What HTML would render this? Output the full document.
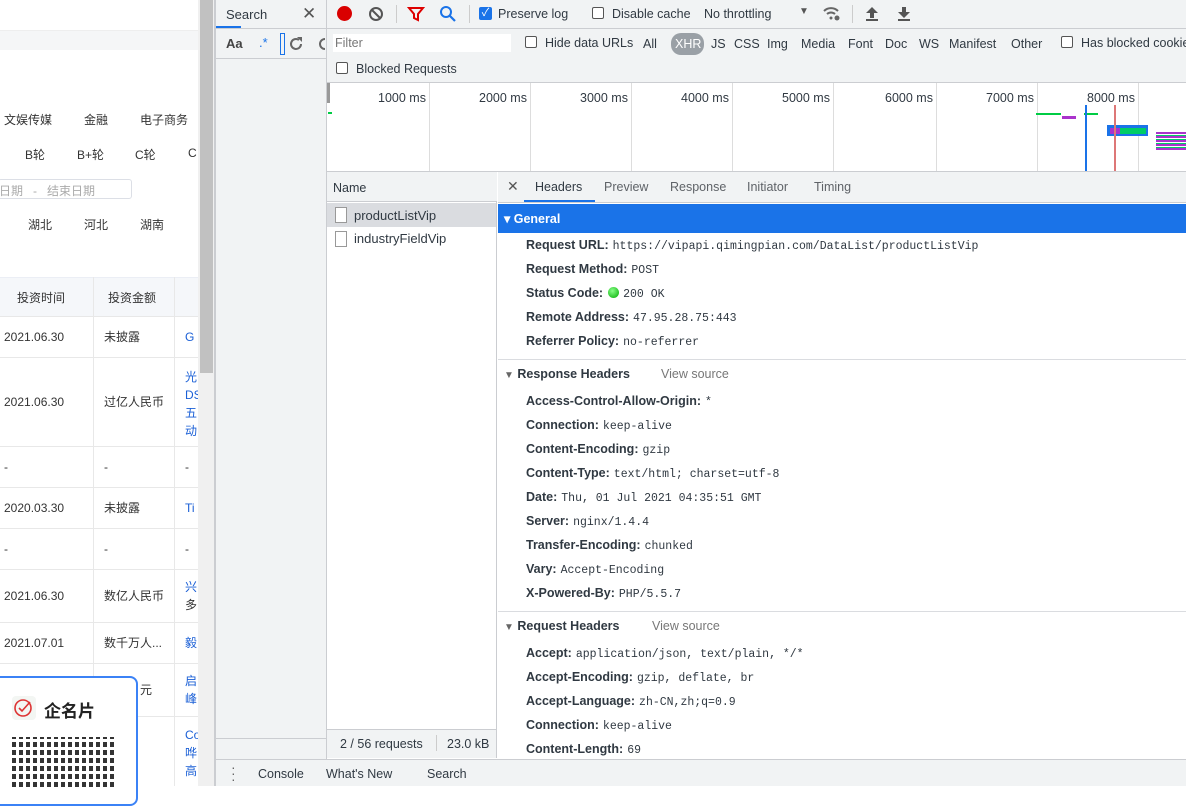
<!DOCTYPE html>
<html><head><meta charset="utf-8"><style>
*{margin:0;padding:0;box-sizing:border-box}
body{width:1186px;height:786px;overflow:hidden;position:relative;background:#fff;font-family:"Liberation Sans","Noto Sans CJK SC",sans-serif;font-size:12px;color:#303942}
.a{position:absolute;white-space:nowrap}
.cn{font-size:12px;color:#333}
.ln{position:absolute;background:#e8e8e8}
.dt{font-size:12.5px;color:#303942}
.k{position:absolute;font-weight:bold;font-size:12.5px;color:#303942;white-space:nowrap}
.v{font-family:"Liberation Mono",monospace;font-weight:normal;font-size:11.5px;margin-left:4px}
.cb{position:absolute;width:12px;height:12px;border:1px solid #555;border-radius:2px;background:#fff}
.blue{color:#1a5fd6}
</style></head><body>
<!-- left page -->
<div class="a" style="left:0;top:30px;width:198px;height:20px;background:#f5f6f7;border-top:1px solid #eee"></div>
<div class="a cn" style="left:4px;top:111px">文娱传媒</div>
<div class="a cn" style="left:84px;top:111px">金融</div>
<div class="a cn" style="left:140px;top:111px">电子商务</div>
<div class="a cn" style="left:25px;top:146px">B轮</div>
<div class="a cn" style="left:77px;top:146px">B+轮</div>
<div class="a cn" style="left:135px;top:146px">C轮</div>
<div class="a cn" style="left:188px;top:146px">C</div>
<div class="a" style="left:-2px;top:179px;width:134px;height:20px;border:1px solid #dcdfe6;border-radius:3px;color:#aaa;font-size:12px;padding:2px 0 0 0">日期 &nbsp; - &nbsp; 结束日期</div>
<div class="a cn" style="left:28px;top:216px">湖北</div>
<div class="a cn" style="left:84px;top:216px">河北</div>
<div class="a cn" style="left:140px;top:216px">湖南</div>
<div class="a" style="left:0;top:277px;width:198px;height:40px;background:#f5f7fa;border-top:1px solid #ebeef5"></div>
<div class="a cn" style="left:17px;top:289px">投资时间</div>
<div class="a cn" style="left:108px;top:289px">投资金额</div>
<div class="ln" style="left:93px;top:277px;width:1px;height:509px"></div>
<div class="ln" style="left:174px;top:277px;width:1px;height:509px"></div>
<div class="ln" style="left:0;top:316px;width:198px;height:1px"></div>
<div class="ln" style="left:0;top:357px;width:198px;height:1px"></div>
<div class="ln" style="left:0;top:446px;width:198px;height:1px"></div>
<div class="ln" style="left:0;top:487px;width:198px;height:1px"></div>
<div class="ln" style="left:0;top:528px;width:198px;height:1px"></div>
<div class="ln" style="left:0;top:569px;width:198px;height:1px"></div>
<div class="ln" style="left:0;top:622px;width:198px;height:1px"></div>
<div class="ln" style="left:0;top:663px;width:198px;height:1px"></div>
<div class="ln" style="left:0;top:716px;width:198px;height:1px"></div>
<div class="a cn" style="left:4px;top:330px">2021.06.30</div><div class="a cn" style="left:104px;top:328px">未披露</div><div class="a blue" style="left:185px;top:330px">G</div>
<div class="a cn" style="left:4px;top:395px">2021.06.30</div><div class="a cn" style="left:104px;top:393px">过亿人民币</div>
<div class="a blue" style="left:185px;top:368px;line-height:18px;white-space:normal;width:14px;overflow:hidden">光<br>DS<br>五<br>动</div>
<div class="a cn" style="left:4px;top:460px">-</div><div class="a cn" style="left:104px;top:460px">-</div><div class="a cn" style="left:185px;top:460px">-</div>
<div class="a cn" style="left:4px;top:501px">2020.03.30</div><div class="a cn" style="left:104px;top:499px">未披露</div><div class="a blue" style="left:185px;top:501px">Ti</div>
<div class="a cn" style="left:4px;top:542px">-</div><div class="a cn" style="left:104px;top:542px">-</div><div class="a cn" style="left:185px;top:542px">-</div>
<div class="a cn" style="left:4px;top:589px">2021.06.30</div><div class="a cn" style="left:104px;top:587px">数亿人民币</div><div class="a blue" style="left:185px;top:578px;line-height:18px">兴<br><span style="color:#333">多</span></div>
<div class="a cn" style="left:4px;top:636px">2021.07.01</div><div class="a cn" style="left:104px;top:634px">数千万人...</div><div class="a blue" style="left:185px;top:634px">毅</div>
<div class="a cn" style="left:140px;top:681px">元</div><div class="a blue" style="left:185px;top:672px;line-height:18px">启<br>峰</div>
<div class="a blue" style="left:185px;top:726px;line-height:18px">Co<br>哗<br>高</div>
<div class="a" style="left:-10px;top:676px;width:148px;height:130px;border:2px solid #3b82f6;border-radius:8px;background:#fff"></div>
<div class="a" style="left:12px;top:696px;width:24px;height:24px;background:#f3f6f3;border-radius:4px"><svg width="24" height="24"><circle cx="11" cy="12" r="8" fill="none" stroke="#d33" stroke-width="1.6"/><path d="M7 12l3 3 8-9" fill="none" stroke="#d33" stroke-width="1.6"/></svg></div>
<div class="a" style="left:44px;top:697px;font-size:17px;font-weight:bold;color:#222">企名片</div>
<div class="a" style="left:12px;top:737px;width:102px;height:50px;background:repeating-linear-gradient(90deg,#111 0 4px,#fff 4px 7px),#111;opacity:.85"></div>
<div class="a" style="left:12px;top:737px;width:102px;height:50px;background:repeating-linear-gradient(0deg,transparent 0 5px,#fff 5px 8px)"></div>
<!-- scrollbar -->
<div class="a" style="left:198px;top:0;width:16px;height:786px;background:#f0f0f0"></div>
<div class="a" style="left:200px;top:0;width:13px;height:373px;background:#c1c1c1"></div>
<div class="a" style="left:214px;top:0;width:2px;height:786px;background:#cbcdd1"></div>
<!-- search panel -->
<div class="a" style="left:216px;top:0;width:111px;height:786px;background:#f1f3f4;border-right:1px solid #cbcdd1"></div>
<div class="a" style="left:216px;top:28px;width:110px;height:1px;background:#cbcdd1"></div>
<div class="a" style="left:216px;top:26px;width:25px;height:2px;background:#1a73e8"></div>
<div class="a dt" style="left:226px;top:7px;font-size:13px">Search</div>
<div class="a" style="left:302px;top:4px;font-size:17px;color:#555">✕</div>
<div class="a" style="left:226px;top:36px;font-weight:bold;font-size:13px;color:#444">Aa</div>
<div class="a" style="left:259px;top:35px;font-size:13px;color:#1a73e8">.*</div>
<div class="a" style="left:280px;top:33px;width:5px;height:22px;border:1.5px solid #1a73e8"></div>
<svg class="a" style="left:288px;top:36px" width="16" height="16"><path d="M13 8a5 5 0 1 1-2-4" fill="none" stroke="#666" stroke-width="2"/><path d="M9 1h5v5z" fill="#666"/></svg>
<svg class="a" style="left:318px;top:36px" width="8" height="16"><path d="M7 3a5 5 0 0 0 0 10" fill="none" stroke="#666" stroke-width="2"/></svg>
<div class="a" style="left:216px;top:58px;width:110px;height:1px;background:#cbcdd1"></div>
<div class="a" style="left:216px;top:738px;width:110px;height:1px;background:#cbcdd1"></div>
<!-- network toolbar -->
<div class="a" style="left:327px;top:0;width:859px;height:82px;background:#f1f3f4"></div>
<div class="a" style="left:327px;top:28px;width:859px;height:1px;background:#cbcdd1"></div>
<div class="a" style="left:337px;top:6px;width:15px;height:15px;border-radius:50%;background:#d90000"></div>
<svg class="a" style="left:368px;top:6px" width="16" height="16"><circle cx="8" cy="8" r="6" fill="none" stroke="#555" stroke-width="2"/><path d="M4 4l8 8" stroke="#555" stroke-width="2"/></svg>
<div class="a" style="left:396px;top:5px;width:1px;height:18px;background:#ccc"></div>
<svg class="a" style="left:407px;top:6px" width="18" height="16"><path d="M2 2h14l-5 6v6l-4-2v-4z" fill="none" stroke="#d00" stroke-width="2"/></svg>
<svg class="a" style="left:439px;top:5px" width="18" height="18"><circle cx="7" cy="7" r="5" fill="none" stroke="#1a73e8" stroke-width="2"/><path d="M11 11l5 5" stroke="#1a73e8" stroke-width="2.2"/></svg>
<div class="a" style="left:469px;top:5px;width:1px;height:18px;background:#ccc"></div>
<div class="a" style="left:479px;top:7px;width:13px;height:13px;background:#1a73e8;border-radius:2px;color:#fff;font-size:11px;line-height:13px;text-align:center">✓</div>
<div class="a dt" style="left:498px;top:7px">Preserve log</div>
<div class="cb" style="left:592px;top:7px"></div>
<div class="a dt" style="left:612px;top:7px">Disable cache</div>
<div class="a dt" style="left:704px;top:7px">No throttling</div>
<div class="a" style="left:799px;top:6px;font-size:10px;color:#555">▼</div>
<svg class="a" style="left:822px;top:5px" width="20" height="16"><path d="M2 6a10 10 0 0 1 14 0M5 9a6 6 0 0 1 8 0" fill="none" stroke="#666" stroke-width="2"/><circle cx="9" cy="13" r="1.5" fill="#666"/><circle cx="15" cy="13" r="2.5" fill="#666"/></svg>
<div class="a" style="left:852px;top:5px;width:1px;height:18px;background:#ccc"></div>
<svg class="a" style="left:865px;top:6px" width="14" height="16"><path d="M7 1l6 6H9v5H5V7H1z" fill="#555"/><rect x="1" y="13" width="12" height="2" fill="#555"/></svg>
<svg class="a" style="left:897px;top:6px" width="14" height="16"><path d="M7 12l6-6H9V1H5v5H1z" fill="#555"/><rect x="1" y="13" width="12" height="2" fill="#555"/></svg>
<div class="a" style="left:333px;top:34px;width:178px;height:18px;background:#fff"></div>
<div class="a" style="left:335px;top:36px;color:#777;font-size:12.5px">Filter</div>
<div class="cb" style="left:525px;top:36px"></div>
<div class="a dt" style="left:545px;top:36px">Hide data URLs</div>
<div class="a dt" style="left:643px;top:37px">All</div>
<div class="a" style="left:671px;top:33px;width:33px;height:22px;background:#9aa0a6;border-radius:10px;color:#fff;font-size:12.5px;padding:4px 0 0 4px">XHR</div>
<div class="a dt" style="left:711px;top:37px">JS</div>
<div class="a dt" style="left:734px;top:37px">CSS</div>
<div class="a dt" style="left:767px;top:37px">Img</div>
<div class="a dt" style="left:801px;top:37px">Media</div>
<div class="a dt" style="left:848px;top:37px">Font</div>
<div class="a dt" style="left:885px;top:37px">Doc</div>
<div class="a dt" style="left:919px;top:37px">WS</div>
<div class="a dt" style="left:949px;top:37px">Manifest</div>
<div class="a dt" style="left:1011px;top:37px">Other</div>
<div class="cb" style="left:1061px;top:36px"></div>
<div class="a dt" style="left:1081px;top:36px">Has blocked cookies</div>
<div class="cb" style="left:336px;top:62px"></div>
<div class="a dt" style="left:356px;top:62px">Blocked Requests</div>
<div class="a" style="left:327px;top:82px;width:859px;height:1px;background:#cbcdd1"></div>
<!-- timeline -->
<div class="a" style="left:327px;top:83px;width:859px;height:88px;background:#fff"></div>
<div class="a" style="left:327px;top:83px;width:3px;height:20px;background:#999"></div>
<div class="a" style="left:328px;top:112px;width:4px;height:2px;background:#0c4"></div>
<div class="a" style="left:429px;top:83px;width:1px;height:88px;background:#ddd"></div>
<div class="a" style="left:530px;top:83px;width:1px;height:88px;background:#ddd"></div>
<div class="a" style="left:631px;top:83px;width:1px;height:88px;background:#ddd"></div>
<div class="a" style="left:732px;top:83px;width:1px;height:88px;background:#ddd"></div>
<div class="a" style="left:833px;top:83px;width:1px;height:88px;background:#ddd"></div>
<div class="a" style="left:936px;top:83px;width:1px;height:88px;background:#ddd"></div>
<div class="a" style="left:1037px;top:83px;width:1px;height:88px;background:#ddd"></div>
<div class="a" style="left:1138px;top:83px;width:1px;height:88px;background:#ddd"></div>
<div class="a dt" style="left:378px;top:91px">1000 ms</div>
<div class="a dt" style="left:479px;top:91px">2000 ms</div>
<div class="a dt" style="left:580px;top:91px">3000 ms</div>
<div class="a dt" style="left:681px;top:91px">4000 ms</div>
<div class="a dt" style="left:782px;top:91px">5000 ms</div>
<div class="a dt" style="left:885px;top:91px">6000 ms</div>
<div class="a dt" style="left:986px;top:91px">7000 ms</div>
<div class="a dt" style="left:1087px;top:91px">8000 ms</div>
<div class="a" style="left:1036px;top:113px;width:25px;height:2px;background:#0c4"></div>
<div class="a" style="left:1062px;top:116px;width:14px;height:3px;background:#a3c"></div>
<div class="a" style="left:1084px;top:113px;width:14px;height:2px;background:#0c4"></div>
<div class="a" style="left:1107px;top:125px;width:41px;height:11px;background:#1a73e8"></div>
<div class="a" style="left:1110px;top:128px;width:10px;height:6px;background:#a3c"></div>
<div class="a" style="left:1120px;top:128px;width:26px;height:6px;background:#0c6"></div>
<div class="a" style="left:1085px;top:105px;width:2px;height:66px;background:#1a73e8"></div>
<div class="a" style="left:1114px;top:105px;width:2px;height:66px;background:#d77"></div>
<div class="a" style="left:1156px;top:132px;width:30px;height:18px;background:repeating-linear-gradient(0deg,#a3c 0 2px,#0c6 2px 3px,#fff 3px 4px)"></div>
<div class="a" style="left:327px;top:171px;width:859px;height:1px;background:#cbcdd1"></div>
<!-- name list -->
<div class="a" style="left:327px;top:172px;width:170px;height:586px;background:#fff;border-right:1px solid #cbcdd1"></div>
<div class="a" style="left:327px;top:172px;width:170px;height:30px;background:#f1f3f4;border-bottom:1px solid #cbcdd1"></div>
<div class="a dt" style="left:333px;top:181px">Name</div>
<div class="a" style="left:327px;top:203px;width:169px;height:24px;background:#dadce0"></div>
<div class="a" style="left:335px;top:207px;width:12px;height:16px;border:1px solid #999;background:#fff"></div>
<div class="a dt" style="left:354px;top:208px;font-size:13px">productListVip</div>
<div class="a" style="left:335px;top:231px;width:12px;height:16px;border:1px solid #999;background:#fff"></div>
<div class="a dt" style="left:354px;top:231px;font-size:13px">industryFieldVip</div>
<div class="a" style="left:327px;top:729px;width:170px;height:29px;background:#f1f3f4;border-top:1px solid #cbcdd1;border-right:1px solid #cbcdd1"></div>
<div class="a dt" style="left:340px;top:737px">2 / 56 requests</div>
<div class="a" style="left:436px;top:735px;width:1px;height:16px;background:#ccc"></div>
<div class="a dt" style="left:447px;top:737px">23.0 kB</div>
<!-- details -->
<div class="a" style="left:498px;top:172px;width:688px;height:31px;background:#f1f3f4;border-bottom:1px solid #cbcdd1"></div>
<div class="a" style="left:507px;top:178px;font-size:14px;color:#555">✕</div>
<div class="a dt" style="left:535px;top:180px">Headers</div>
<div class="a" style="left:524px;top:200px;width:71px;height:2px;background:#1a73e8"></div>
<div class="a dt" style="left:604px;top:180px;color:#5f6368">Preview</div>
<div class="a dt" style="left:670px;top:180px;color:#5f6368">Response</div>
<div class="a dt" style="left:747px;top:180px;color:#5f6368">Initiator</div>
<div class="a dt" style="left:814px;top:180px;color:#5f6368">Timing</div>
<div class="a" style="left:498px;top:204px;width:688px;height:29px;background:#1a73e8"></div>
<div class="a" style="left:504px;top:211px;color:#fff;font-weight:bold;font-size:12.5px">▾ General</div>
<div class="k" style="left:526px;top:238px">Request URL:<span class="v">https://vipapi.qimingpian.com/DataList/productListVip</span></div>
<div class="k" style="left:526px;top:262px">Request Method:<span class="v">POST</span></div>
<div class="k" style="left:526px;top:286px">Status Code:<span style="display:inline-block;width:11px;height:11px;border-radius:50%;background:radial-gradient(circle at 40% 35%,#8f8,#0a0);margin-left:5px;vertical-align:-1px"></span><span class="v">200 OK</span></div>
<div class="k" style="left:526px;top:310px">Remote Address:<span class="v">47.95.28.75:443</span></div>
<div class="k" style="left:526px;top:334px">Referrer Policy:<span class="v">no-referrer</span></div>
<div class="a" style="left:498px;top:359px;width:688px;height:1px;background:#dadce0"></div>
<div class="k" style="left:504px;top:367px"><span style="color:#666;font-size:10px">▼</span> Response Headers</div>
<div class="a dt" style="left:661px;top:367px;color:#777">View source</div>
<div class="k" style="left:526px;top:394px">Access-Control-Allow-Origin:<span class="v">*</span></div>
<div class="k" style="left:526px;top:418px">Connection:<span class="v">keep-alive</span></div>
<div class="k" style="left:526px;top:442px">Content-Encoding:<span class="v">gzip</span></div>
<div class="k" style="left:526px;top:466px">Content-Type:<span class="v">text/html; charset=utf-8</span></div>
<div class="k" style="left:526px;top:490px">Date:<span class="v">Thu, 01 Jul 2021 04:35:51 GMT</span></div>
<div class="k" style="left:526px;top:514px">Server:<span class="v">nginx/1.4.4</span></div>
<div class="k" style="left:526px;top:538px">Transfer-Encoding:<span class="v">chunked</span></div>
<div class="k" style="left:526px;top:562px">Vary:<span class="v">Accept-Encoding</span></div>
<div class="k" style="left:526px;top:586px">X-Powered-By:<span class="v">PHP/5.5.7</span></div>
<div class="a" style="left:498px;top:611px;width:688px;height:1px;background:#dadce0"></div>
<div class="k" style="left:504px;top:619px"><span style="color:#666;font-size:10px">▼</span> Request Headers</div>
<div class="a dt" style="left:652px;top:619px;color:#777">View source</div>
<div class="k" style="left:526px;top:646px">Accept:<span class="v">application/json, text/plain, */*</span></div>
<div class="k" style="left:526px;top:670px">Accept-Encoding:<span class="v">gzip, deflate, br</span></div>
<div class="k" style="left:526px;top:694px">Accept-Language:<span class="v">zh-CN,zh;q=0.9</span></div>
<div class="k" style="left:526px;top:718px">Connection:<span class="v">keep-alive</span></div>
<div class="k" style="left:526px;top:742px">Content-Length:<span class="v">69</span></div>
<!-- drawer -->
<div class="a" style="left:216px;top:759px;width:970px;height:27px;background:#f1f3f4;border-top:1px solid #cbcdd1"></div>
<div class="a" style="left:231px;top:764px;font-size:14px;color:#666;line-height:6px">·<br>·<br>·</div>
<div class="a dt" style="left:258px;top:767px">Console</div>
<div class="a dt" style="left:326px;top:767px">What's New</div>
<div class="a dt" style="left:427px;top:767px">Search</div>
</body></html>
